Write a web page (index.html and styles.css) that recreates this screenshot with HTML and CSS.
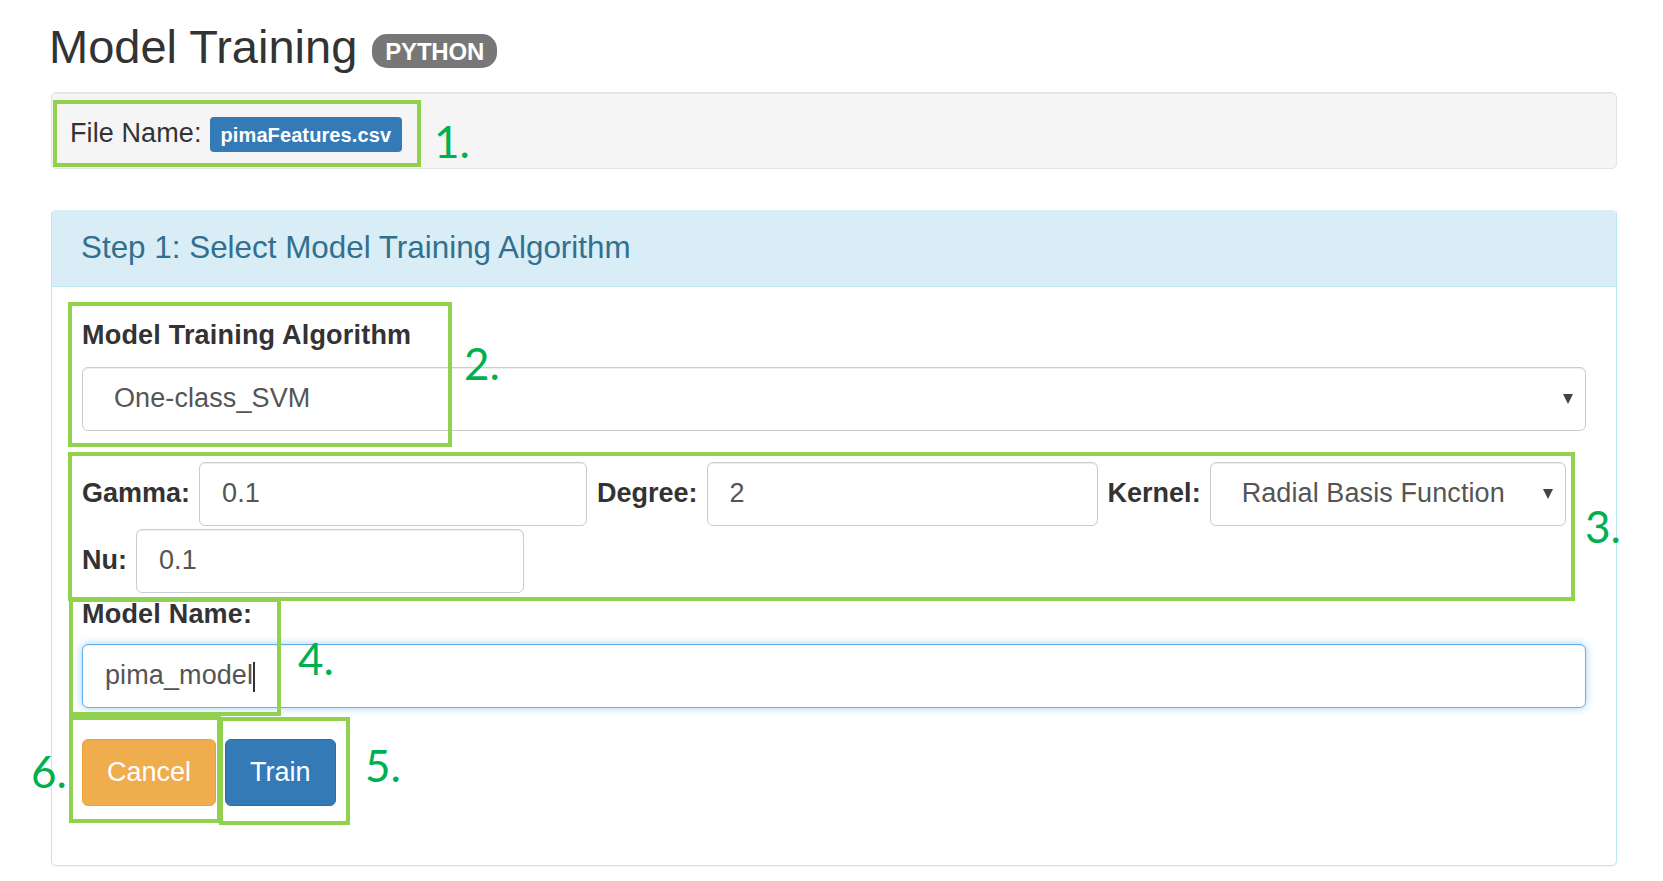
FILE: index.html
```html
<!DOCTYPE html>
<html lang="en">
<head>
<meta charset="utf-8">
<title>Model Training</title>
<link rel="stylesheet" href="styles.css">
</head>
<body>
<div class="page">
  <h1 class="title"><span class="title-text">Model Training</span><span class="badge-lang">PYTHON</span></h1>

  <div class="well">
    <span class="file-label">File Name:</span>
    <span class="file-badge">pimaFeatures.csv</span>
  </div>

  <div class="panel">
    <div class="panel-heading">
      <h3 class="panel-title">Step 1: Select Model Training Algorithm</h3>
    </div>
    <div class="panel-body">
      <label class="field-label algo-label">Model Training Algorithm</label>
      <div class="select-wrap">
        <select class="control select"><option>One-class_SVM</option></select>
      </div>

      <div class="params">
        <div class="param">
          <label class="param-label">Gamma:</label>
          <input class="control input w-gamma" value="0.1">
        </div>
        <div class="param">
          <label class="param-label">Degree:</label>
          <input class="control input w-degree" value="2">
        </div>
        <div class="param">
          <label class="param-label">Kernel:</label>
          <div class="select-wrap w-kernel">
            <select class="control select"><option>Radial Basis Function</option></select>
          </div>
        </div>
        <div class="param">
          <label class="param-label">Nu:</label>
          <input class="control input w-gamma" value="0.1">
        </div>
      </div>

      <label class="field-label name-label">Model Name:</label>
      <div class="input-wrap">
        <input class="control input focused" value="pima_model">
        <span class="caret"></span>
      </div>

      <div class="actions">
        <button class="btn btn-warning">Cancel</button>
        <button class="btn btn-primary">Train</button>
      </div>
    </div>
  </div>

  <div class="annotations">
    <div class="box box1"></div>
    <div class="box box2"></div>
    <div class="box box3"></div>
    <div class="box box4"></div>
    <div class="box box5"></div>
    <div class="box box6"></div>
    <span class="num num1">1.</span>
    <span class="num num2">2.</span>
    <span class="num num3">3.</span>
    <span class="num num4">4.</span>
    <span class="num num5">5.</span>
    <span class="num num6">6.</span>
  </div>
</div>
</body>
</html>
```

FILE: styles.css
```css
* { box-sizing: border-box; }

html, body {
  margin: 0;
  padding: 0;
  background: #ffffff;
}

body {
  font-family: "Liberation Sans", Arial, Helvetica, sans-serif;
  color: #333333;
}

.page {
  position: relative;
  width: 1663px;
  min-height: 881px;
  padding: 0 46px 0 51px;
  overflow: hidden;
}

/* Title */
.title {
  display: flex;
  align-items: flex-start;
  gap: 15px;
  margin: 22px 0 0 -2px;
  font-size: 47px;
  line-height: 50px;
  font-weight: 400;
  color: #333333;
}

.badge-lang {
  margin-top: 12px;
  padding: 6px 13px 4px;
  font-size: 24px;
  line-height: 1;
  font-weight: 700;
  color: #ffffff;
  background: #777777;
  border-radius: 15px;
  letter-spacing: -0.2px;
}

/* Well */
.well {
  display: flex;
  align-items: baseline;
  gap: 8px;
  height: 77px;
  margin-top: 20px;
  padding: 21px 16px 0 18px;
  background: #f5f5f5;
  border: 1px solid #e3e3e3;
  border-radius: 5px;
  box-shadow: inset 0 1px 1px rgba(0, 0, 0, 0.05);
}

.file-label {
  font-size: 27px;
  line-height: 38px;
  color: #333333;
  letter-spacing: 0.1px;
}

.file-badge {
  padding: 8px 11px 7px;
  font-size: 20px;
  line-height: 1;
  font-weight: 700;
  color: #ffffff;
  background: #337ab7;
  border-radius: 4px;
  letter-spacing: 0.1px;
}

/* Panel */
.panel {
  margin-top: 40px;
  border: 1px solid #bce8f1;
  border-radius: 5px;
  background: #ffffff;
  box-shadow: 0 1px 1px rgba(0, 0, 0, 0.05);
}

.panel-heading {
  padding: 21px 29px;
  background: #d9edf7;
  border-bottom: 1px solid #bce8f1;
  border-top: 1px solid #ffffff;
  border-radius: 4px 4px 0 0;
  margin-top: -1px;
}

.panel-title {
  margin: 0;
  font-size: 31.4px;
  line-height: 34px;
  font-weight: 400;
  color: #31708f;
}

.panel-body {
  padding: 29px 30px 59px;
}

.field-label {
  display: block;
  font-size: 27px;
  line-height: 38px;
  font-weight: 700;
  color: #333333;
  letter-spacing: 0.2px;
}

.algo-label { margin: 0 0 13px; }
.name-label { margin: 2px 0 11px; }

/* Controls */
.control {
  display: block;
  height: 64px;
  font-family: "Liberation Sans", Arial, Helvetica, sans-serif;
  font-size: 27px;
  color: #555555;
  background: #ffffff;
  border: 1px solid #cccccc;
  border-radius: 6px;
  box-shadow: inset 0 1px 1px rgba(0, 0, 0, 0.075);
  outline: none;
  letter-spacing: 0.1px;
}

.input {
  padding: 0 22px 2px;
}

.select {
  width: 100%;
  padding: 0 44px 3px 31px;
  -webkit-appearance: none;
  appearance: none;
}

.select-wrap {
  position: relative;
}

.select-wrap::after {
  content: "";
  position: absolute;
  right: 13px;
  top: 50%;
  margin-top: -5px;
  width: 0;
  height: 0;
  border-left: 5.5px solid transparent;
  border-right: 5.5px solid transparent;
  border-top: 10px solid #444444;
  pointer-events: none;
}

.params {
  display: flex;
  flex-wrap: wrap;
  column-gap: 10px;
  row-gap: 3px;
  margin-top: 31px;
}

.param {
  display: flex;
  align-items: center;
  gap: 9px;
}

.param-label {
  font-size: 27px;
  line-height: 38px;
  font-weight: 700;
  color: #333333;
  margin-top: -2px;
}

.w-gamma { width: 388px; }
.w-degree { width: 391px; }
.w-kernel { width: 356px; }

.input-wrap {
  position: relative;
}

.input-wrap .input {
  width: 100%;
}

.focused {
  border-color: #66afe9;
  box-shadow: inset 0 1px 1px rgba(0, 0, 0, 0.075), 0 0 8px rgba(102, 175, 233, 0.6);
}

.caret {
  position: absolute;
  left: 171px;
  top: 18px;
  width: 2px;
  height: 30px;
  background: #333333;
}

/* Buttons */
.actions {
  display: flex;
  gap: 9px;
  margin-top: 31px;
}

.btn {
  height: 67px;
  padding: 0 24px;
  font-family: "Liberation Sans", Arial, Helvetica, sans-serif;
  font-size: 27px;
  color: #ffffff;
  border: 1px solid transparent;
  border-radius: 6px;
  cursor: pointer;
}

.btn-warning {
  background: #f0ad4e;
  border-color: #eea236;
}

.btn-primary {
  background: #337ab7;
  border-color: #2e6da4;
}

/* Annotation overlay */
.annotations {
  position: absolute;
  left: 0;
  top: 0;
  width: 100%;
  height: 100%;
  pointer-events: none;
}

.box {
  position: absolute;
  border: 4px solid #92d050;
}

.box1 { left: 53px; top: 100px; width: 368px; height: 67px; }
.box2 { left: 68px; top: 302px; width: 384px; height: 145px; }
.box3 { left: 68px; top: 452px; width: 1507px; height: 149px; }
.box4 { left: 69px; top: 598px; width: 212px; height: 118px; }
.box5 { left: 219px; top: 717px; width: 131px; height: 108px; }
.box6 { left: 69px; top: 716px; width: 152px; height: 107px; }

.num {
  position: absolute;
  font-family: Lato, "Open Sans", sans-serif;
  font-size: 44px;
  line-height: 1;
  color: #00b050;
}

.num1 { left: 434px; top: 119px; }
.num2 { left: 464px; top: 341px; }
.num3 { left: 1585px; top: 504px; }
.num4 { left: 298px; top: 636px; }
.num5 { left: 365px; top: 743px; }
.num6 { left: 31px; top: 749px; }
```
